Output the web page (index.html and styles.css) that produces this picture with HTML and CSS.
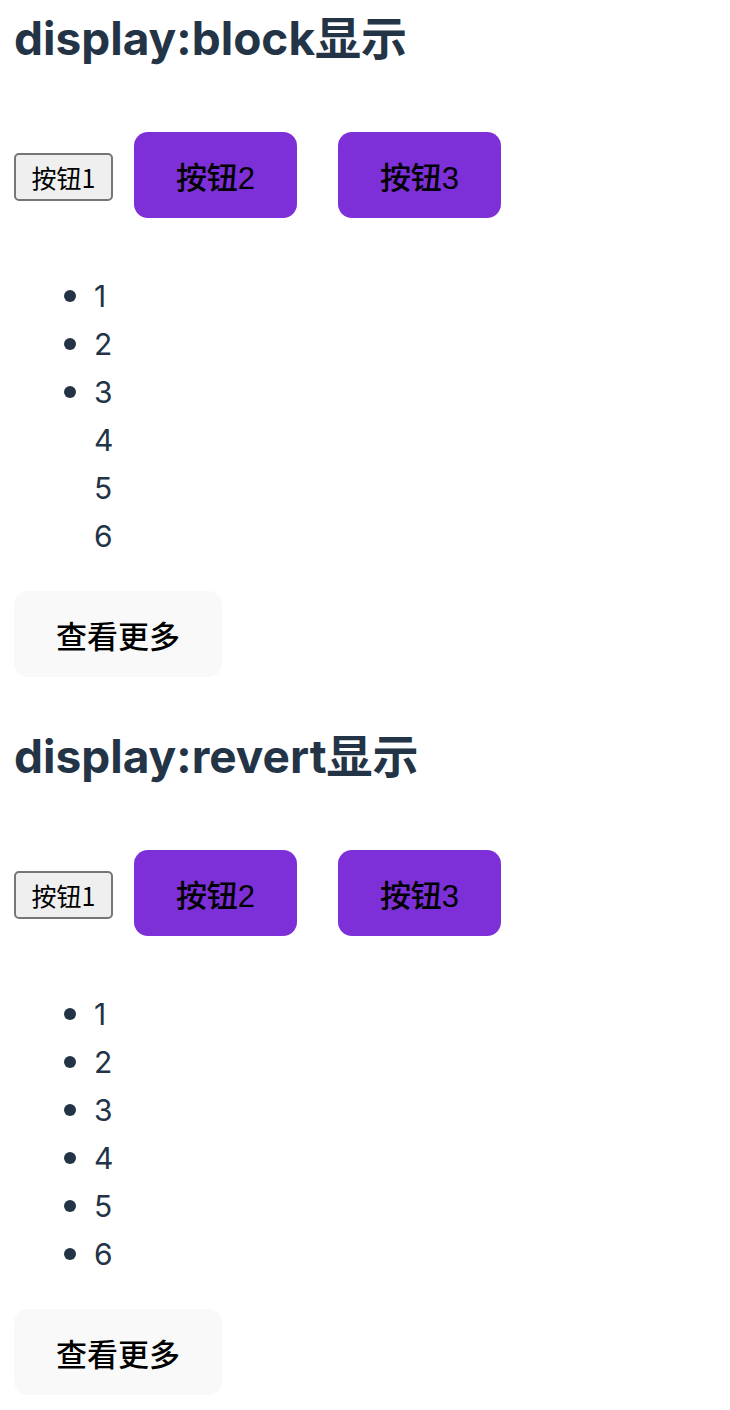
FILE: index.html
```html
<!DOCTYPE html>
<html lang="zh">
<head>
<meta charset="utf-8">
<title>display</title>
<link rel="stylesheet" href="styles.css">
</head>
<body>
<section class="demo">
  <h1 class="title">display:block显示</h1>
  <div class="row">
    <button class="native">按钮1</button>
    <button class="btn btn-a">按钮2</button>
    <button class="btn btn-b">按钮3</button>
  </div>
  <ul class="list">
    <li>1</li>
    <li>2</li>
    <li>3</li>
    <li class="plain">4</li>
    <li class="plain">5</li>
    <li class="plain">6</li>
  </ul>
  <button class="more">查看更多</button>
</section>
<section class="demo">
  <h1 class="title">display:revert显示</h1>
  <div class="row">
    <button class="native">按钮1</button>
    <button class="btn btn-a">按钮2</button>
    <button class="btn btn-b">按钮3</button>
  </div>
  <ul class="list">
    <li>1</li>
    <li>2</li>
    <li>3</li>
    <li>4</li>
    <li>5</li>
    <li>6</li>
  </ul>
  <button class="more">查看更多</button>
</section>
</body>
</html>
```

FILE: styles.css
```css
html, body {
  margin: 0;
  padding: 0;
  background: #ffffff;
}
body {
  padding: 14px 14px 0 14px;
  font-family: Inter, "Noto Sans CJK SC", sans-serif;
  color: #243447;
}
.demo {
  display: flex;
  flex-direction: column;
  align-items: flex-start;
  margin-bottom: 55px;
}
.title {
  margin: 0;
  font-size: 46px;
  line-height: 48px;
  font-weight: 700;
  color: #243447;
}
.row {
  display: flex;
  align-items: flex-start;
  margin-top: 70px;
}
.native {
  margin-top: 21px;
  width: 99px;
  height: 48px;
  padding: 0;
  border: 2px solid #767676;
  border-radius: 5px;
  background: #efefef;
  color: #000;
  font-family: "Noto Sans CJK SC", sans-serif;
  font-size: 25px;
  line-height: 1;
}
.btn {
  width: 163px;
  height: 86px;
  border: 0;
  border-radius: 14px;
  background: #7e30d8;
  color: #000;
  font-family: "Liberation Sans", "Noto Sans CJK SC", sans-serif;
  font-size: 31px;
  font-weight: 500;
  padding: 0;
}
.btn-a {
  margin-left: 21px;
}
.btn-b {
  margin-left: 41px;
}
.list {
  margin: 54px 0 0 0;
  padding: 0 0 0 80px;
  list-style: disc;
  font-size: 30px;
  line-height: 48px;
}
.list li {
  height: 48px;
}
.list li::marker {
  font: 36px/30px Inter, sans-serif;
}
.list .plain {
  display: block;
}
.more {
  margin-top: 31px;
  width: 208px;
  height: 86px;
  border: 0;
  border-radius: 14px;
  background: #f9f9f9;
  color: #000;
  font-family: "Noto Sans CJK SC", sans-serif;
  font-size: 31px;
  font-weight: 500;
  padding: 0;
}
```
